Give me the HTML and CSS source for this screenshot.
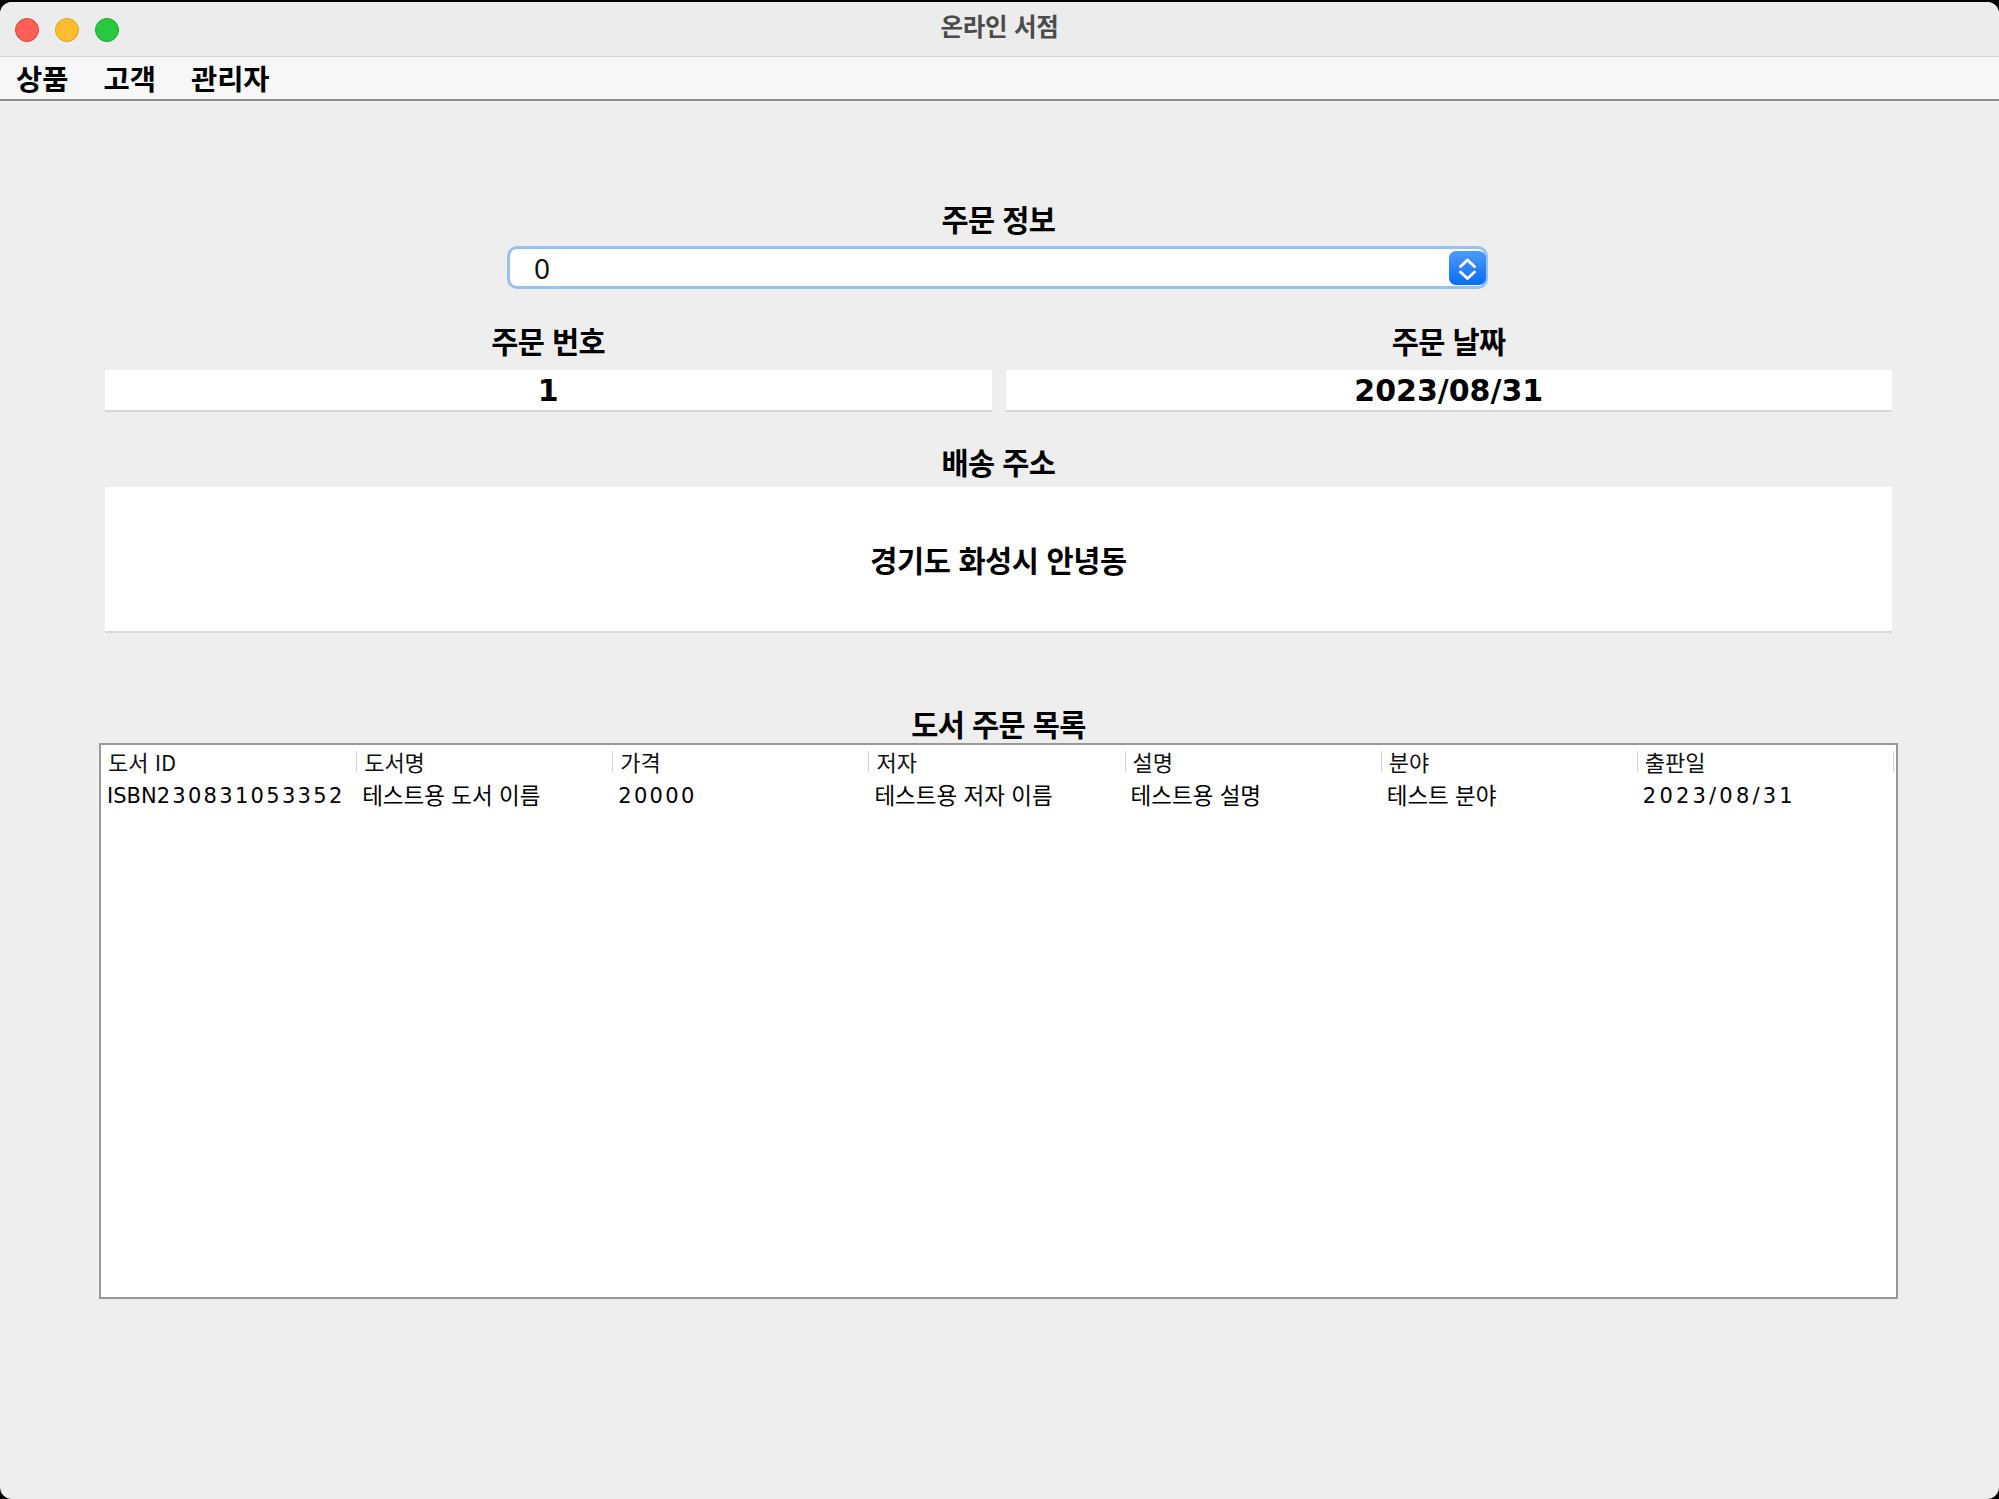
FILE: index.html
```html
<!DOCTYPE html>
<html lang="ko">
<head>
<meta charset="utf-8">
<title>온라인 서점</title>
<link rel="stylesheet" href="styles.css">
</head>
<body>
<div class="window">
  <header class="titlebar">
    <div class="lights">
      <span class="light red"></span>
      <span class="light yellow"></span>
      <span class="light green"></span>
    </div>
    <div class="title">온라인 서점</div>
    <div></div>
  </header>
  <nav class="menubar">
    <span class="menu-item">상품</span>
    <span class="menu-item">고객</span>
    <span class="menu-item">관리자</span>
  </nav>
  <main class="content">
    <h2 class="heading first">주문 정보</h2>
    <div class="combo">
      <span class="combo-value">0</span>
      <span class="combo-button">
        <svg width="37" height="34" viewBox="0 0 37 34">
          <path d="M11.5 15.5 L18.5 9 L25.5 15.5" fill="none" stroke="#fff" stroke-width="3" stroke-linecap="round" stroke-linejoin="round"/>
          <path d="M11.5 21 L18.5 27.5 L25.5 21" fill="none" stroke="#fff" stroke-width="3" stroke-linecap="round" stroke-linejoin="round"/>
        </svg>
      </span>
    </div>
    <div class="pair">
      <div class="col">
        <h2 class="heading">주문 번호</h2>
        <div class="field num-bold">1</div>
      </div>
      <div class="col">
        <h2 class="heading">주문 날짜</h2>
        <div class="field num-bold">2023/08/31</div>
      </div>
    </div>
    <h2 class="heading addr-heading">배송 주소</h2>
    <div class="field address">경기도 화성시 안녕동</div>
    <h2 class="heading list-heading">도서 주문 목록</h2>
    <div class="table">
      <div class="thead">
        <div class="th">도서 ID</div>
        <div class="th">도서명</div>
        <div class="th">가격</div>
        <div class="th">저자</div>
        <div class="th">설명</div>
        <div class="th">분야</div>
        <div class="th">출판일</div>
      </div>
      <div class="tr">
        <div class="td"><span class="latin">ISBN</span><span class="num">230831053352</span></div>
        <div class="td">테스트용 도서 이름</div>
        <div class="td"><span class="num">20000</span></div>
        <div class="td">테스트용 저자 이름</div>
        <div class="td">테스트용 설명</div>
        <div class="td">테스트 분야</div>
        <div class="td"><span class="num date">2023/08/31</span></div>
      </div>
    </div>
  </main>
</div>
</body>
</html>
```

FILE: styles.css
```css
html, body {
  margin: 0;
  padding: 0;
  background: #000;
}

body {
  width: 1999px;
  height: 1499px;
  overflow: hidden;
  font-family: "Noto Sans CJK KR", "Noto Sans", sans-serif;
}

.window {
  margin-top: 2px;
  width: 1999px;
  height: 1497px;
  background: #eeeeee;
  border-radius: 12px;
  overflow: hidden;
  display: flex;
  flex-direction: column;
}

.titlebar {
  height: 54px;
  flex: none;
  background: #ececec;
  border-bottom: 1px solid #d6d6d6;
  display: grid;
  grid-template-columns: 1fr auto 1fr;
  align-items: center;
}

.lights {
  display: flex;
  gap: 16px;
  padding-left: 15px;
  padding-top: 1px;
}

.light {
  width: 22px;
  height: 22px;
  border-radius: 50%;
  display: block;
}

.light.red { background: #fe5f57; border: 1px solid #e0443e; }
.light.yellow { background: #febc2e; border: 1px solid #dea123; }
.light.green { background: #28c840; border: 1px solid #1aab29; }

.title {
  font-size: 24.5px;
  font-weight: 700;
  color: #4b4b4b;
  letter-spacing: -0.3px;
  line-height: 30px;
  margin-top: -6px;
}

.menubar {
  height: 42px;
  flex: none;
  background: #f7f7f7;
  border-bottom: 2px solid #8c8c8c;
  display: flex;
  align-items: center;
  gap: 35px;
  padding-left: 16px;
}

.menu-item {
  font-size: 28.5px;
  font-weight: 700;
  color: #000;
  line-height: 42px;
}

.content {
  flex: 1;
  display: flex;
  flex-direction: column;
  padding: 0 107px 0 105px;
}

.heading {
  margin: 0;
  font-size: 29.5px;
  font-weight: 700;
  line-height: 40px;
  height: 40px;
  text-align: center;
  color: #000;
  letter-spacing: -0.6px;
}

.heading.first { margin-top: 97px; }

.combo {
  margin-top: 8px;
  align-self: center;
  margin-left: 402px;
  margin-right: 404px;
  width: 981px;
  height: 43px;
  box-sizing: border-box;
  border: 3px solid #95c1f3;
  border-radius: 10px;
  background: #fff;
  display: flex;
  align-items: center;
  justify-content: space-between;
  padding-left: 24px;
  padding-right: 0;
}

.combo-value {
  font-family: "Noto Sans", sans-serif;
  font-size: 28px;
  color: #111;
  line-height: 1;
}

.combo-button {
  width: 37px;
  height: 34px;
  border-radius: 7px;
  background: linear-gradient(#4b9cfb, #0a6cf6);
  display: block;
  margin-right: -1px;
}

.combo-button svg { display: block; }

.pair {
  margin-top: 31px;
  display: grid;
  grid-template-columns: 1fr 1fr;
  gap: 14px;
}

.col {
  display: flex;
  flex-direction: column;
}

.field {
  background: #fff;
  box-shadow: 0 2px 0 #d8d8d8;
  text-align: center;
  color: #000;
}

.col .field {
  margin-top: 10px;
  height: 40px;
  line-height: 42px;
}

.num-bold {
  font-family: "DejaVu Sans", sans-serif;
  font-weight: 700;
  font-size: 30px;
}

.addr-heading { margin-top: 31px; }

.field.address {
  margin-top: 6px;
  height: 144px;
  line-height: 144px;
  font-size: 29.5px;
  font-weight: 700;
  letter-spacing: -0.4px;
}

.list-heading { margin-top: 72px; }

.table {
  margin-left: -6px;
  margin-right: -6px;
  height: 556px;
  box-sizing: border-box;
  border: 2px solid #999;
  background: #fff;
  display: flex;
  flex-direction: column;
}

.thead, .tr {
  display: grid;
  grid-template-columns: repeat(7, 1fr);
  padding-right: 2px;
}

.thead {
  height: 33px;
  align-items: center;
}

.th {
  position: relative;
  font-size: 22px;
  color: #111;
  padding-left: 7px;
  line-height: 33px;
  white-space: nowrap;
}

.th::after {
  content: "";
  position: absolute;
  right: 0;
  top: 6px;
  height: 21px;
  width: 1px;
  background: #d4d4d4;
}

.tr {
  height: 32px;
  align-items: center;
}

.td {
  font-size: 22.5px;
  color: #000;
  padding-left: 5px;
  line-height: 32px;
  white-space: nowrap;
  overflow: hidden;
}

.td:first-child { padding-left: 6px; }

.latin {
  font-family: "DejaVu Sans", sans-serif;
  font-size: 21px;
}

.num {
  font-family: "DejaVu Sans", sans-serif;
  font-size: 21px;
  letter-spacing: 2.3px;
}

.num.date { letter-spacing: 3.2px; }
```
